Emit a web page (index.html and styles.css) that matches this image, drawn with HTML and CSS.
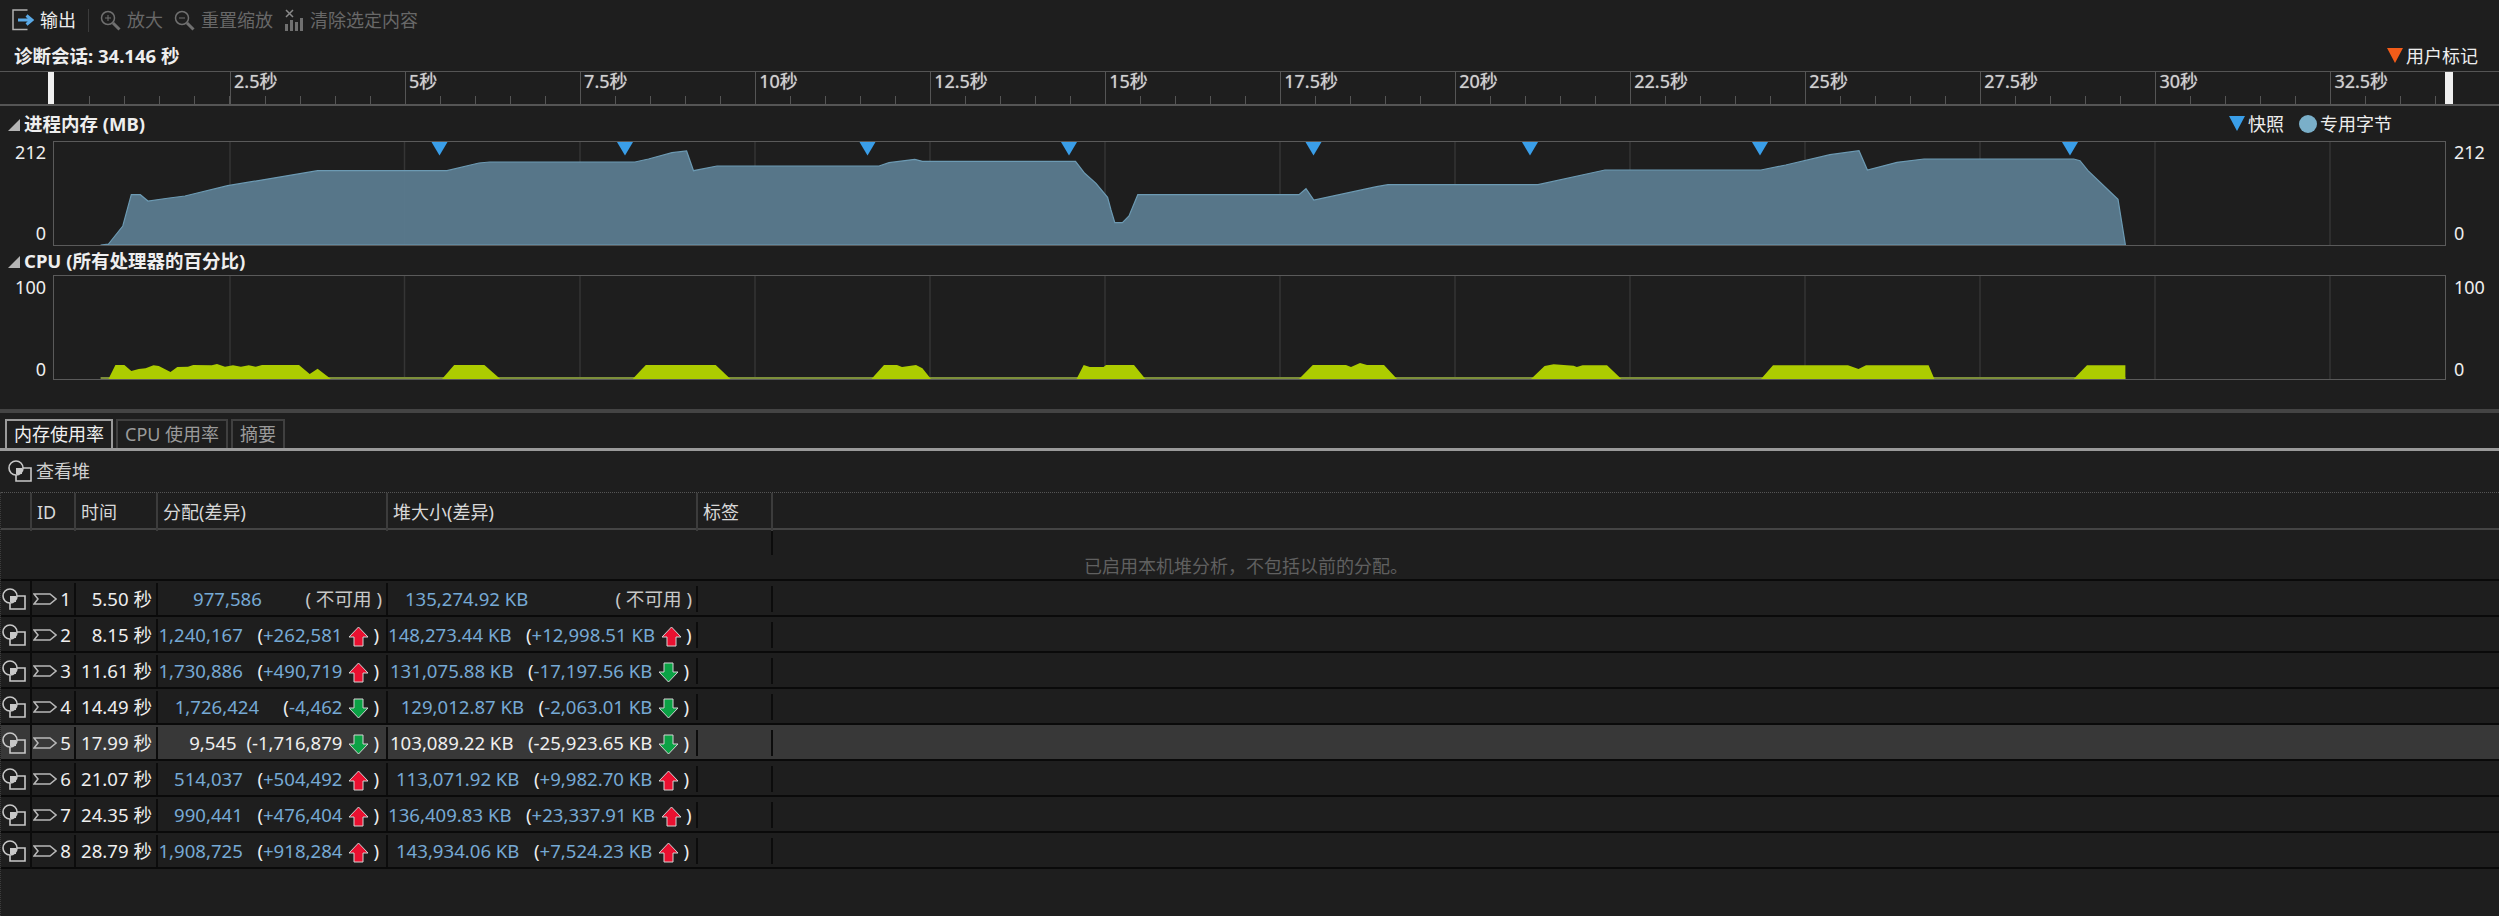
FILE: index.html
```html
<!DOCTYPE html>
<html lang="zh-CN">
<head>
	<title>诊断会话</title>
	<meta charset="utf-8">
	<link rel="stylesheet" href="styles.css">
</head>
<body>
	<svg class="defs" width="0" height="0">
		<symbol id="heap" viewBox="0 0 24 22">
			<circle cx="8" cy="8" r="7" fill="none" stroke="#c8c8c8" stroke-width="1.6"/>
			<path d="M15 8H23V21H8V15" fill="none" stroke="#c8c8c8" stroke-width="1.6"/>
			<rect x="8" y="8" width="6" height="6" fill="#c8c8c8"/>
		</symbol>
		<symbol id="tag" viewBox="0 0 24 12">
			<path d="M1 1H17L23 6L17 11H1L5 6Z" fill="none" stroke="#b8b8b8" stroke-width="1.5"/>
		</symbol>
		<symbol id="up" viewBox="0 0 21 21">
			<path d="M10.5 1L20 11H15V20H6V11H1Z" fill="#ea1030" stroke="#d4d4d4"/>
		</symbol>
		<symbol id="down" viewBox="0 0 21 21">
			<path d="M10.5 20L20 10H15V1H6V10H1Z" fill="#0ba245" stroke="#d4d4d4"/>
		</symbol>
	</svg>

	<div class="toolbar">
		<div class="tool">
			<svg width="22" height="22" viewBox="0 0 22 22"><path d="M15.500 1H1V20.500H15.500" fill="none" stroke="#b0b0b0" stroke-width="1.500"/><path d="M6 11H19M14.500 6.500L20 11L14.500 15.500" fill="none" stroke="#5aa9e6" stroke-width="3"/></svg>
			<span>输出</span>
		</div>
		<div class="toolbar-sep"></div>
		<div class="tool off">
			<svg width="21" height="21" viewBox="0 0 21 21"><circle cx="8" cy="8" r="6.500" fill="none" stroke="#707070" stroke-width="1.500"/><path d="M5 8H11M8 5V11" stroke="#707070"/><path d="M13 13L19.500 19.500" stroke="#707070" stroke-width="3"/></svg>
			<span>放大</span>
		</div>
		<div class="tool off">
			<svg width="21" height="21" viewBox="0 0 21 21"><circle cx="8" cy="8" r="6.500" fill="none" stroke="#707070" stroke-width="1.500"/><path d="M5 8H11" stroke="#707070"/><path d="M13 13L19.500 19.500" stroke="#707070" stroke-width="3"/></svg>
			<span>重置缩放</span>
		</div>
		<div class="tool off">
			<svg width="20" height="22" viewBox="0 0 20 22"><path d="M2 1L9 8M9 1L2 8" stroke="#8a8a8a" stroke-width="1.500"/><path d="M2.500 22V15M7.500 22V11M12.500 22V13M17.500 22V9" stroke="#707070" stroke-width="3"/></svg>
			<span>清除选定内容</span>
		</div>
	</div>

	<div class="session">
		<span class="session-title">诊断会话: 34.146 秒</span>
		<div class="legend">
			<i class="tri tri-orange"></i><span>用户标记</span>
		</div>
	</div>

	<div class="ruler">
		<div class="mark"></div>
		<div class="mark">2.5秒</div>
		<div class="mark">5秒</div>
		<div class="mark">7.5秒</div>
		<div class="mark">10秒</div>
		<div class="mark">12.5秒</div>
		<div class="mark">15秒</div>
		<div class="mark">17.5秒</div>
		<div class="mark">20秒</div>
		<div class="mark">22.5秒</div>
		<div class="mark">25秒</div>
		<div class="mark">27.5秒</div>
		<div class="mark">30秒</div>
		<div class="mark mark-last">32.5秒</div>
		<div class="handle handle-start"></div>
		<div class="handle handle-end"></div>
	</div>

	<div class="chart-head mem-head">
		<span class="chart-title"><i class="caret"></i>进程内存 (MB)</span>
		<div class="legend legend-mem">
			<i class="tri tri-blue"></i><span>快照</span>
			<i class="dot"></i><span>专用字节</span>
		</div>
	</div>
	<div class="plot">
		<div class="axis axis-left axis-mem"><span>212</span><span>0</span></div>
		<svg class="graph" width="2393" height="105" viewBox="53 141 2393 105">
			<path class="grid" d="M230 141V245M404.500 141V245M580 141V245M755 141V245M930 141V245M1105 141V245M1280 141V245M1455 141V245M1630 141V245M1805 141V245M1980 141V245M2155 141V245M2330 141V245"/>
			<polygon class="mem" points="100.600,245 108.500,244 122.800,226 131.300,194.700 140.300,194.700 148,201 169.400,198 185,196 227.600,185.700 317.600,170.700 447,170.700 479,163 489.700,162 635,162 648.500,159 672,152.700 686.600,151 693.500,170.700 717,166 879,166 889,162.700 914.800,159.300 922.400,161.300 1075.500,161.300 1084.700,173.300 1096,183.300 1107.600,197.300 1111,210 1114.800,222.700 1122.400,222.700 1129,216 1137.800,194.700 1299,194.700 1306,188.700 1313.800,200 1376.500,186.700 1388,184.700 1538,184.700 1605,170 1761,170 1785.700,165 1830,154.700 1859,150.700 1867.400,170 1897,162.300 1924,159 2073.700,159 2080,160.700 2088,170.700 2111.600,193.300 2118,199.300 2125.400,245"/>
			<g class="snap">
				<path d="M431.500 142H447.500L439.500 155.500Z"/>
				<path d="M617 142H633L625 155.500Z"/>
				<path d="M859.500 142H875.500L867.500 155.500Z"/>
				<path d="M1061 142H1077L1069 155.500Z"/>
				<path d="M1305.500 142H1321.500L1313.500 155.500Z"/>
				<path d="M1522 142H1538L1530 155.500Z"/>
				<path d="M1752 142H1768L1760 155.500Z"/>
				<path d="M2062 142H2078L2070 155.500Z"/>
			</g>
			<rect class="frame" x="53.500" y="141.500" width="2392" height="104"/>
		</svg>
		<div class="axis axis-right axis-mem"><span>212</span><span>0</span></div>
	</div>

	<div class="chart-head cpu-head">
		<span class="chart-title"><i class="caret"></i>CPU (所有处理器的百分比)</span>
	</div>
	<div class="plot">
		<div class="axis axis-left axis-cpu"><span>100</span><span>0</span></div>
		<svg class="graph" width="2393" height="105" viewBox="53 275 2393 105">
			<path class="grid" d="M230 275V379M404.500 275V379M580 275V379M755 275V379M930 275V379M1105 275V379M1280 275V379M1455 275V379M1630 275V379M1805 275V379M1980 275V379M2155 275V379M2330 275V379"/>
			<path class="cpu-base" d="M100.600 378H2125.400"/>
			<polygon class="cpu" points="108.500,379 115.400,365 124.400,365 131.300,371 138.700,369 145.600,368.300 153.500,365.300 158.800,366 170.500,372 177.300,367 188,366.700 193.200,365 211.800,365.300 217,364 225,366.700 233,365.300 240.900,366.700 248.800,365.300 255.700,366.700 262,365 299,365 309.700,374 317.600,368.700 330.900,379"/>
			<polygon class="cpu" points="442,379 454.200,365 484.400,365 500.300,379"/>
			<polygon class="cpu" points="632.600,379 645.800,365 715.700,365 730.500,379"/>
			<polygon class="cpu" points="871.400,379 884,365 897,365 902,367 916,365 922.400,368.300 931,379"/>
			<polygon class="cpu" points="1076.500,379 1083.700,365 1089.800,367 1103.600,367 1106,365 1134,365 1145.400,379"/>
			<polygon class="cpu" points="1299,379 1312.800,365 1346,365 1351,367 1360,363 1367,365 1384,365 1397,379"/>
			<polygon class="cpu" points="1531,379 1544.600,366 1553.600,364.300 1573.700,365.700 1576.800,367 1582.600,365.300 1607,365.300 1621.400,379"/>
			<polygon class="cpu" points="1761,379 1773,365.300 1848,365.300 1858.500,369 1866,365.300 1928.600,365.300 1934.400,379"/>
			<polygon class="cpu" points="2073.700,379 2087,365.300 2125.400,365.300 2125.400,379"/>
			<rect class="frame" x="53.500" y="275.500" width="2392" height="104"/>
		</svg>
		<div class="axis axis-right axis-cpu"><span>100</span><span>0</span></div>
	</div>

	<div class="splitter"></div>

	<div class="tabs">
		<div class="tab active">内存使用率</div>
		<div class="tab">CPU 使用率</div>
		<div class="tab">摘要</div>
	</div>

	<div class="heap-bar">
		<svg class="heap-icon" width="24" height="22"><use href="#heap"/></svg>
		<span>查看堆</span>
	</div>

	<div class="table">
		<div class="head">
			<div></div>
			<div>ID</div>
			<div>时间</div>
			<div>分配(差异)</div>
			<div>堆大小(差异)</div>
			<div>标签</div>
			<div></div>
		</div>
		<div class="notice">
			<div class="notice-stub"></div>
			<div class="notice-text">已启用本机堆分析，不包括以前的分配。</div>
		</div>

		<div class="row">
			<div class="c-heap"><svg width="24" height="22"><use href="#heap"/></svg></div>
			<div class="cell c-id"><svg width="24" height="12"><use href="#tag"/></svg>1</div>
			<div class="cell c-time">5.50 秒</div>
			<div class="cell c-num"><span class="val">977,586</span>         <span class="na">( 不可用 )</span></div>
			<div class="cell c-num"><span class="val">135,274.92 KB</span>                  <span class="na">( 不可用 )</span></div>
			<div class="cell c-tag"></div>
			<div class="cell c-end"></div>
		</div>
		<div class="row">
			<div class="c-heap"><svg width="24" height="22"><use href="#heap"/></svg></div>
			<div class="cell c-id"><svg width="24" height="12"><use href="#tag"/></svg>2</div>
			<div class="cell c-time">8.15 秒</div>
			<div class="cell c-num"><span class="val">1,240,167</span>   (<span class="val">+262,581</span><svg class="arrow" width="21" height="21"><use href="#up"/></svg>)</div>
			<div class="cell c-num"><span class="val">148,273.44 KB</span>   (<span class="val">+12,998.51 KB</span><svg class="arrow" width="21" height="21"><use href="#up"/></svg>)</div>
			<div class="cell c-tag"></div>
			<div class="cell c-end"></div>
		</div>
		<div class="row">
			<div class="c-heap"><svg width="24" height="22"><use href="#heap"/></svg></div>
			<div class="cell c-id"><svg width="24" height="12"><use href="#tag"/></svg>3</div>
			<div class="cell c-time">11.61 秒</div>
			<div class="cell c-num"><span class="val">1,730,886</span>   (<span class="val">+490,719</span><svg class="arrow" width="21" height="21"><use href="#up"/></svg>)</div>
			<div class="cell c-num"><span class="val">131,075.88 KB</span>   (<span class="val">-17,197.56 KB</span><svg class="arrow" width="21" height="21"><use href="#down"/></svg>)</div>
			<div class="cell c-tag"></div>
			<div class="cell c-end"></div>
		</div>
		<div class="row">
			<div class="c-heap"><svg width="24" height="22"><use href="#heap"/></svg></div>
			<div class="cell c-id"><svg width="24" height="12"><use href="#tag"/></svg>4</div>
			<div class="cell c-time">14.49 秒</div>
			<div class="cell c-num"><span class="val">1,726,424</span>     (<span class="val">-4,462</span><svg class="arrow" width="21" height="21"><use href="#down"/></svg>)</div>
			<div class="cell c-num"><span class="val">129,012.87 KB</span>   (<span class="val">-2,063.01 KB</span><svg class="arrow" width="21" height="21"><use href="#down"/></svg>)</div>
			<div class="cell c-tag"></div>
			<div class="cell c-end"></div>
		</div>
		<div class="row selected">
			<div class="c-heap"><svg width="24" height="22"><use href="#heap"/></svg></div>
			<div class="cell c-id"><svg width="24" height="12"><use href="#tag"/></svg>5</div>
			<div class="cell c-time">17.99 秒</div>
			<div class="cell c-num"><span class="val">9,545</span>  (<span class="val">-1,716,879</span><svg class="arrow" width="21" height="21"><use href="#down"/></svg>)</div>
			<div class="cell c-num"><span class="val">103,089.22 KB</span>   (<span class="val">-25,923.65 KB</span><svg class="arrow" width="21" height="21"><use href="#down"/></svg>)</div>
			<div class="cell c-tag"></div>
			<div class="cell c-end"></div>
		</div>
		<div class="row">
			<div class="c-heap"><svg width="24" height="22"><use href="#heap"/></svg></div>
			<div class="cell c-id"><svg width="24" height="12"><use href="#tag"/></svg>6</div>
			<div class="cell c-time">21.07 秒</div>
			<div class="cell c-num"><span class="val">514,037</span>   (<span class="val">+504,492</span><svg class="arrow" width="21" height="21"><use href="#up"/></svg>)</div>
			<div class="cell c-num"><span class="val">113,071.92 KB</span>   (<span class="val">+9,982.70 KB</span><svg class="arrow" width="21" height="21"><use href="#up"/></svg>)</div>
			<div class="cell c-tag"></div>
			<div class="cell c-end"></div>
		</div>
		<div class="row">
			<div class="c-heap"><svg width="24" height="22"><use href="#heap"/></svg></div>
			<div class="cell c-id"><svg width="24" height="12"><use href="#tag"/></svg>7</div>
			<div class="cell c-time">24.35 秒</div>
			<div class="cell c-num"><span class="val">990,441</span>   (<span class="val">+476,404</span><svg class="arrow" width="21" height="21"><use href="#up"/></svg>)</div>
			<div class="cell c-num"><span class="val">136,409.83 KB</span>   (<span class="val">+23,337.91 KB</span><svg class="arrow" width="21" height="21"><use href="#up"/></svg>)</div>
			<div class="cell c-tag"></div>
			<div class="cell c-end"></div>
		</div>
		<div class="row last">
			<div class="c-heap"><svg width="24" height="22"><use href="#heap"/></svg></div>
			<div class="cell c-id"><svg width="24" height="12"><use href="#tag"/></svg>8</div>
			<div class="cell c-time">28.79 秒</div>
			<div class="cell c-num"><span class="val">1,908,725</span>   (<span class="val">+918,284</span><svg class="arrow" width="21" height="21"><use href="#up"/></svg>)</div>
			<div class="cell c-num"><span class="val">143,934.06 KB</span>   (<span class="val">+7,524.23 KB</span><svg class="arrow" width="21" height="21"><use href="#up"/></svg>)</div>
			<div class="cell c-tag"></div>
			<div class="cell c-end"></div>
		</div>
	</div>
</body>
</html>
```

FILE: styles.css
```css
* {
	box-sizing: border-box;
}
html, body {
	margin: 0;
	height: 100%;
	overflow: hidden;
	background: #1e1e1e;
}
body {
	font-family: "Noto Sans", "Noto Sans CJK SC", sans-serif;
	font-size: 18px;
	line-height: 22px;
	color: #eee;
}
.defs {
	display: block;
	height: 0;
}

/* toolbar */
.toolbar {
	height: 40px;
	padding-left: 12px;
	display: flex;
	align-items: center;
	gap: 11px;
}
.tool {
	display: flex;
	align-items: center;
	gap: 6px;
}
.tool.off {
	color: #686868;
}
.toolbar-sep {
	width: 1px;
	height: 23px;
	margin-left: 1px;
	background: #3c3c3c;
}

/* session row */
.session {
	height: 31px;
	padding: 0 21px 0 14px;
	display: flex;
	align-items: center;
	justify-content: space-between;
}
.session-title {
	font-size: 18.5px;
	font-weight: 700;
}
.legend {
	display: flex;
	align-items: center;
	gap: 3px;
}
.tri {
	width: 0;
	height: 0;
	border-left: 8.5px solid transparent;
	border-right: 8.5px solid transparent;
	border-top: 15px solid #3a9ee8;
}
.tri-orange {
	border-top-color: #f25c19;
}
.dot {
	width: 18px;
	height: 18px;
	margin-left: 12px;
	border-radius: 50%;
	background: #7aafc9;
}

/* time ruler */
.ruler {
	position: relative;
	height: 35px;
	padding-left: 55px;
	display: flex;
	border-top: 1px solid #555;
	border-bottom: 2px solid #555;
}
.mark {
	flex: 0 0 175.04px;
	padding-left: 3px;
	line-height: 18px;
	color: #d0d0d0;
	text-shadow: 0 0 1px #aaa;
	border-left: 1px solid #555;
	background: linear-gradient(to right, #555 1px, transparent 1px) -1px 100% / 35px 8px repeat-x;
}
.mark:first-child {
	border-left: 0;
}
.mark-last {
	flex-basis: 115px;
}
.handle {
	position: absolute;
	top: 0;
	bottom: 0;
	background: #f0f0f0;
}
.handle-start {
	left: 48px;
	width: 6px;
}
.handle-end {
	left: 2445px;
	width: 8px;
}

/* charts */
.chart-head {
	display: flex;
	align-items: center;
	justify-content: space-between;
}
.mem-head {
	height: 35px;
}
.cpu-head {
	height: 29px;
}
.chart-title {
	display: flex;
	align-items: center;
	font-size: 18.5px;
	font-weight: 700;
}
.caret {
	width: 0;
	height: 0;
	margin: 2px 4px 0 8px;
	border-left: 12px solid transparent;
	border-bottom: 12px solid #b4b4b4;
}
.legend-mem {
	padding-right: 107px;
}
.plot {
	height: 105px;
	display: grid;
	grid-template-columns: 53px 2393px 1fr;
}
.graph {
	display: block;
}
.axis {
	display: flex;
	flex-direction: column;
	justify-content: space-between;
}
.axis-mem {
	padding-bottom: 2px;
}
.axis-cpu {
	padding-top: 1px;
}
.axis-left {
	padding-right: 7px;
	text-align: right;
}
.axis-right {
	padding-left: 8px;
}
.grid {
	stroke: #353535;
	stroke-width: 1.5;
}
.mem {
	fill: #5a7a8e;
	fill-opacity: 0.96;
	stroke: #6c9ab3;
	stroke-width: 1.2;
}
.snap {
	fill: #3a9ee8;
}
.frame {
	fill: none;
	stroke: #5a5a5a;
}
.cpu {
	fill: #adcc00;
}
.cpu-base {
	stroke: #7d8f3a;
	stroke-width: 2;
}

/* tabs */
.splitter {
	height: 4px;
	margin-top: 29px;
	background: #444;
}
.tabs {
	height: 38px;
	padding: 6px 0 0 5px;
	display: flex;
	gap: 3px;
	border-bottom: 3px solid #9a9a9a;
}
.tab {
	height: 29px;
	padding: 0 7px;
	line-height: 26px;
	color: #9a9a9a;
	border: 2px solid #404040;
	border-bottom: 0;
}
.tab.active {
	color: #f0f0f0;
	border-color: #9a9a9a;
}

/* view heap */
.heap-bar {
	height: 41px;
	padding: 0 0 2px 8px;
	display: flex;
	align-items: center;
	gap: 4px;
	color: #d0d0d0;
}

/* table */
.table {
	border-left: 1px dotted #3c3c3c;
	height: 424px;
}
.head, .row {
	display: grid;
	grid-template-columns: 29px 44px 82px 230px 310px 75px 1fr;
}
.head {
	height: 38px;
	line-height: 38px;
	color: #d8d8d8;
	border-top: 1px dotted #555;
	border-bottom: 2px solid #444;
}
.head > div + div {
	padding-left: 5px;
	border-left: 2px solid #3c3c3c;
}
.notice {
	height: 49px;
}
.notice-stub {
	width: 2px;
	height: 25px;
	margin-left: 770px;
	background: #0c0c0c;
}
.notice-text {
	text-align: center;
	color: #606060;
	padding-right: 8px;
}
.row {
	height: 36px;
	border-top: 2px solid #0a0a0a;
	font-size: 18.6px;
	line-height: 32px;
}
.row.last {
	height: 38px;
	border-bottom: 2px solid #0a0a0a;
}
.row.selected {
	background: #383838;
}
.c-heap {
	padding: 7px 0 0 1px;
}
.c-heap svg {
	display: block;
}
.cell {
	margin: 2px 0;
	border-left: 2px solid #0c0c0c;
	white-space: pre;
	text-align: right;
}
.c-id {
	margin: 0;
	padding: 0 3px 0 1px;
	display: flex;
	align-items: center;
	justify-content: space-between;
}
.c-time {
	padding-right: 4px;
}
.c-num {
	padding-right: 7px;
}
.c-tag, .c-end {
	margin: 5px 0;
}
.c-end {
	border-left-color: #0c0c0c;
}
.val {
	color: #76a9d4;
}
.selected .val {
	color: #eee;
}
.na {
	margin-right: -3px;
	color: #c8c8c8;
}
.arrow {
	margin: 0 4px 0 6px;
	vertical-align: -5px;
}
```
